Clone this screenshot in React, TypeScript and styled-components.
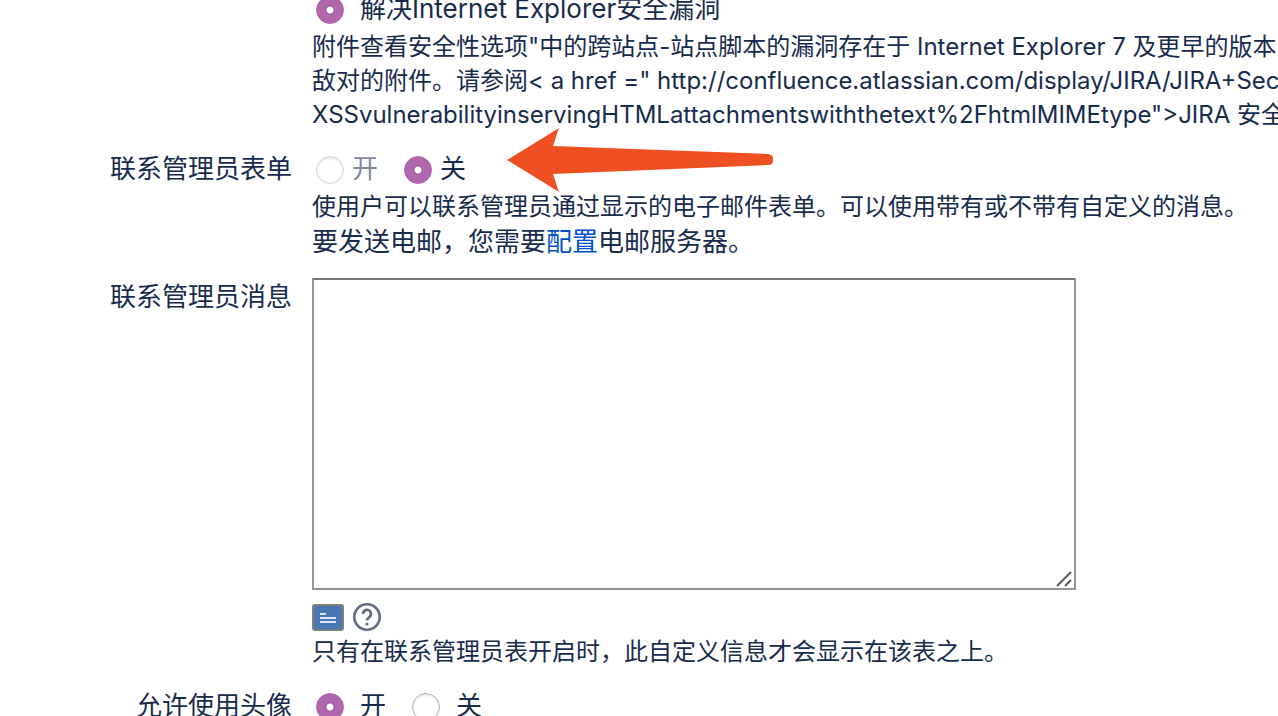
import React from "react";
import styled, { createGlobalStyle } from "styled-components";

const GlobalStyle = createGlobalStyle`
  *, *::before, *::after { box-sizing: border-box; }
  body {
    margin: 0;
    overflow: hidden;
    background: #fff;
    color: #172b4d;
    font-family: Inter, "Noto Sans CJK SC", sans-serif;
  }
`;

const Viewport = styled.main`
  height: 100vh;
  overflow: hidden;
`;

const Form = styled.form`
  display: flex;
  flex-direction: column;
  gap: 18px;
  margin-top: -10px;
`;

const Field = styled.div`
  position: relative;
  display: grid;
  grid-template-columns: 292px minmax(0, 1fr);
  column-gap: 20px;
`;

const FieldName = styled.label`
  font-size: 26px;
  line-height: 38px;
  text-align: right;
`;

const FieldBody = styled.div`
  grid-column: 2;
`;

const Options = styled.div`
  display: flex;
  align-items: flex-start;
  gap: 26px;
  height: 40px;
  padding-left: 4px;
`;

const Option = styled.label<{ $gap: number; $muted?: boolean }>`
  display: flex;
  align-items: center;
  gap: ${(p) => p.$gap}px;
  font-size: 26px;
  line-height: 38px;
  white-space: nowrap;
  color: ${(p) => (p.$muted ? "#7f899c" : "inherit")};
`;

const Radio = styled.input`
  appearance: none;
  flex: none;
  width: 28px;
  height: 28px;
  margin: 2px 0 0;
  border: 1px solid #b0b0b0;
  border-radius: 50%;
  background: #fff;
  box-shadow: inset 0 1px 3px #dedede;

  &:disabled {
    border-color: #d6d6d6;
  }

  &:checked {
    border-color: #b067ae;
    background: radial-gradient(circle, #fff 3px, #a05c9e 4px, #b067ae 6px);
    box-shadow: none;
  }
`;

const Description = styled.p<{ $nowrap?: boolean }>`
  margin: 0;
  font-size: 24px;
  line-height: 34px;
  white-space: ${(p) => (p.$nowrap ? "nowrap" : "normal")};
`;

const Notice = styled.p`
  margin: 0;
  font-size: 26px;
  line-height: 36px;
`;

const Link = styled.a`
  color: #0052cc;
  text-decoration: none;
`;

const MessageBox = styled.div`
  position: relative;
  max-width: 764px;
`;

const Message = styled.textarea`
  display: block;
  width: 100%;
  height: 312px;
  padding: 8px;
  border: 2px solid #959595;
  border-top-color: #767676;
  border-radius: 0;
  outline: 0;
  background: #fff;
  color: inherit;
  font: inherit;
  resize: none;
`;

const Grip = styled.svg`
  position: absolute;
  right: 2px;
  bottom: 2px;
`;

const Tools = styled.div`
  display: flex;
  align-items: center;
  gap: 8px;
  height: 45px;
  padding-top: 8px;
`;

const ToolButton = styled.button`
  display: flex;
  padding: 0;
  border: 0;
  background: none;
`;

const Arrow = styled.svg`
  position: absolute;
  left: 506px;
  top: -24px;
`;

export default function App() {
  return (
    <Viewport>
      <GlobalStyle />
      <Form>
        <Field>
          <FieldBody>
            <Options>
              <Option $gap={16}>
                <Radio type="radio" name="attachments" defaultChecked />
                解决Internet Explorer安全漏洞
              </Option>
            </Options>
            <Description $nowrap>
              附件查看安全性选项"中的跨站点-站点脚本的漏洞存在于 Internet Explorer 7 及更早的版本
              <br />
              敌对的附件。请参阅&lt; a href =" http://confluence.atlassian.com/display/JIRA/JIRA+Security
              <br />
              XSSvulnerabilityinservingHTMLattachmentswiththetext%2FhtmlMIMEtype"&gt;JIRA 安全
            </Description>
          </FieldBody>
        </Field>

        <Field role="radiogroup" aria-labelledby="contact-form">
          <FieldName as="span" id="contact-form">联系管理员表单</FieldName>
          <FieldBody>
            <Options>
              <Option $gap={8} $muted>
                <Radio type="radio" name="contact" disabled />开
              </Option>
              <Option $gap={8}>
                <Radio type="radio" name="contact" defaultChecked />关
              </Option>
            </Options>
            <Description>使用户可以联系管理员通过显示的电子邮件表单。可以使用带有或不带有自定义的消息。</Description>
            <Notice>
              要发送电邮，您需要<Link href="#mail">配置</Link>电邮服务器。
            </Notice>
          </FieldBody>
          <Arrow width="268" height="66" viewBox="0 0 268 66" aria-hidden="true">
            <path
              d="M1 34 53 2 47 20 262 28Q267 29 267 32V35Q267 39 262 39L47 48 53 66Z"
              fill="#ee5024"
            />
          </Arrow>
        </Field>

        <Field>
          <FieldName htmlFor="message">联系管理员消息</FieldName>
          <FieldBody>
            <MessageBox>
              <Message id="message" />
              <Grip width="18" height="18" viewBox="0 0 18 18" aria-hidden="true">
                <path d="M1 16 15 2M9 16 15 10" stroke="#5c5c5c" strokeWidth="2" />
              </Grip>
            </MessageBox>
            <Tools>
              <ToolButton type="button" aria-label="预览">
                <svg width="32" height="28" viewBox="0 0 32 28">
                  <rect x="1" y="2" width="30" height="25" rx="2" fill="#4a77b4" stroke="#7b8078" strokeWidth="2" />
                  <path d="M8 11h6M8 15h16M8 19h16" stroke="#dce6f2" strokeWidth="2" />
                </svg>
              </ToolButton>
              <ToolButton type="button" aria-label="帮助">
                <svg width="30" height="30" viewBox="0 0 30 30" fill="none" stroke="#5e6c84">
                  <circle cx="15" cy="15" r="12.700" strokeWidth="2.600" />
                  <path d="M11 12a4 4 0 1 1 6.500 3c-1.800 1.200-2.500 1.600-2.500 3.500" strokeWidth="2.800" />
                  <circle cx="15" cy="22" r="1.600" fill="#5e6c84" stroke="none" />
                </svg>
              </ToolButton>
            </Tools>
            <Description>只有在联系管理员表开启时，此自定义信息才会显示在该表之上。</Description>
          </FieldBody>
        </Field>

        <Field role="radiogroup" aria-labelledby="avatars">
          <FieldName as="span" id="avatars">允许使用头像</FieldName>
          <FieldBody>
            <Options>
              <Option $gap={16}>
                <Radio type="radio" name="avatars" defaultChecked />开
              </Option>
              <Option $gap={16}>
                <Radio type="radio" name="avatars" />关
              </Option>
            </Options>
          </FieldBody>
        </Field>
      </Form>
    </Viewport>
  );
}
